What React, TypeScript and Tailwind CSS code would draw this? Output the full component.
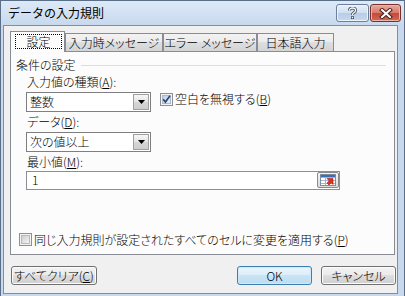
import type { ReactNode } from "react";

function Check({ checked = false }: { checked?: boolean }) {
  const id = checked ? "cbOn" : "cbOff";
  return (
    <svg width="13" height="13" viewBox="0 0 13 13" className="shrink-0">
      <defs>
        <linearGradient id={id} x1="0" y1="0" x2="1" y2="1">
          <stop offset="0" stopColor={checked ? "#b9cbe4" : "#cbcbcb"} />
          <stop offset="1" stopColor={checked ? "#eef3fa" : "#f7f7f7"} />
        </linearGradient>
      </defs>
      <rect x="0.5" y="0.5" width="12" height="12" fill="#f4f4f4" stroke="#8e8f8f" />
      <rect x="2.5" y="2.5" width="8" height="8" fill={`url(#${id})`} stroke={checked ? "#a9b9d0" : "#b9b9b9"} />
      {checked && (
        <path d="M3.2 6.3 L5.4 9 L10 2.8" fill="none" stroke="#2f467d" strokeWidth="1.7" />
      )}
    </svg>
  );
}

function Combo({ value }: { value: string }) {
  return (
    <div className="flex h-[20px] w-[125px] border border-[#7f7f7f] bg-white">
      <span className="flex flex-1 items-center pl-[3px]">{value}</span>
      <span className="m-px flex w-[16px] items-center justify-center border border-[#a0a0a0] bg-[linear-gradient(#f6f6f6,#e4e4e4_50%,#d6d6d6_50%,#cdcdcd)]">
        <svg width="7" height="4" viewBox="0 0 7 4">
          <polygon points="0,0 7,0 3.5,4" fill="#000" />
        </svg>
      </span>
    </div>
  );
}

function Btn({ children, main = false, w }: { children: ReactNode; main?: boolean; w: string }) {
  return (
    <div
      className={
        main
          ? `${w} flex h-[19px] items-center justify-center rounded-[3px] border border-[#3c7fb1] bg-[linear-gradient(#eaf5fc,#dbeef9_50%,#c9e4f6_50%,#bddcf1)] shadow-[inset_0_0_0_1px_#cdeafc]`
          : `${w} flex h-[19px] items-center justify-center rounded-[3px] border border-[#707070] bg-[linear-gradient(#f2f2f2,#ebebeb_50%,#dddddd_50%,#cfcfcf)] shadow-[inset_0_0_0_1px_#fcfcfc]`
      }
    >
      {children}
    </div>
  );
}

function Tab({ label, w }: { label: string; w: string }) {
  return (
    <div
      className={`${w} flex h-[18px] items-center justify-center border-x border-t border-[#898c95] bg-[linear-gradient(#f3f3f3,#ebebeb_50%,#dedede_50%,#d4d4d4)]`}
    >
      {label}
    </div>
  );
}

export default function App() {
  return (
    <div className="h-[296px] w-[405px] overflow-hidden bg-white">
      <div className="flex h-[296px] w-[405px] flex-col border-x border-t border-[#5b6f88] bg-[#c8d9ee] font-['Noto_Sans_CJK_JP',sans-serif] text-[12px] font-light leading-none text-black">
        {/* title bar */}
        <div className="flex h-[24px] shrink-0 items-center bg-[linear-gradient(#dde9f7,#c8d9ee)] pl-[7px] pr-[3px]">
          <span className="flex-1 font-normal">データの入力規則</span>
          <div className="flex h-[18px] w-[33px] items-center justify-center rounded-[3px] border border-[#6a7f9b] bg-[linear-gradient(#e6eef9,#d2dff0_50%,#b8cce6_50%,#c6d8ee)] shadow-[inset_0_0_0_1px_#eef4fb]">
            <svg width="9" height="12" viewBox="0 0 9 12">
              <path d="M1.5 3.5 Q1.5 1 4.5 1 Q7.5 1 7.5 3.5 Q7.5 5 5.5 6 Q4.5 6.5 4.5 8" fill="none" stroke="#3d4f66" strokeWidth="3" />
              <path d="M1.5 3.5 Q1.5 1 4.5 1 Q7.5 1 7.5 3.5 Q7.5 5 5.5 6 Q4.5 6.5 4.5 8" fill="none" stroke="#fff" strokeWidth="1.3" />
              <rect x="3" y="9.2" width="3" height="2.8" fill="#3d4f66" />
              <rect x="3.8" y="9.9" width="1.4" height="1.4" fill="#fff" />
            </svg>
          </div>
          <div className="ml-px flex h-[18px] w-[31px] items-center justify-center rounded-[3px] border border-[#7a2f2a] bg-[linear-gradient(#e9a899,#d6796b_50%,#c4483b_50%,#cf6a52)] shadow-[inset_0_0_0_1px_#ecb4a8]">
            <svg width="14" height="11" viewBox="0 0 14 11">
              <path d="M3 2 L11 9 M11 2 L3 9" stroke="#4a1f1a" strokeWidth="4" strokeLinecap="square" />
              <path d="M3 2 L11 9 M11 2 L3 9" stroke="#fff" strokeWidth="2" strokeLinecap="square" />
            </svg>
          </div>
        </div>

        {/* client area */}
        <div className="ml-[2px] flex h-[269px] w-[395px] flex-col border border-[#7d8ea6] bg-[#f0f0f0] pt-[5px] [font-feature-settings:'palt']">
          {/* tabs */}
          <div className="ml-[6px] flex h-[20px] items-end">
            <div className="relative z-10 -mb-px flex h-[21px] w-[55px] items-start border-x border-t border-[#898c95] bg-[#fcfcfc] pl-[4px] pt-[2px]">
              <span className="flex h-[15px] w-[47px] items-center justify-center border border-dotted border-black">設定</span>
            </div>
            <Tab label="入力時メッセージ" w="w-[98px]" />
            <Tab label="エラー メッセージ" w="w-[94px]" />
            <Tab label="日本語入力" w="w-[77px]" />
          </div>

          {/* tab panel */}
          <div className="ml-[6px] flex h-[204px] w-[385px] flex-col border border-[#898c95] bg-[#fcfcfc]">
            <div className="mt-[6px] flex h-[14px] items-center pl-[5px] pr-[8px]">
              <span>条件の設定</span>
              <span className="ml-[5px] h-px flex-1 bg-[#d5dfe5]" />
            </div>

            <div className="flex flex-col pl-[15px]">
              <div className="mt-[3px] flex h-[14px] items-center pl-px">
                入力値の種類(<u>A</u>):
              </div>
              <div className="mt-[3px] flex items-start">
                <Combo value="整数" />
                <span className="ml-[9px] mt-px">
                  <Check checked />
                </span>
                <span className="ml-[2px] flex h-[14px] items-center">
                  空白を無視する(<u>B</u>)
                </span>
              </div>
              <div className="mt-[3px] flex h-[14px] items-center pl-px">
                データ(<u>D</u>):
              </div>
              <div className="mt-[3px] flex">
                <Combo value="次の値以上" />
              </div>
              <div className="mt-[3px] flex h-[14px] items-center pl-px">
                最小値(<u>M</u>):
              </div>
              <div className="mt-[2px] flex h-[19px] w-[314px] items-end border border-[#8d8f96] bg-white pb-px">
                <span className="flex h-[16px] flex-1 items-center pl-[5px]">1</span>
                <span className="flex h-[16px] w-[22px] items-center justify-center rounded-[2px] border border-[#8a8a8a] bg-[linear-gradient(#f4f4f4,#dcdcdc)]">
                  <svg width="16" height="12" viewBox="0 0 16 12">
                    <rect x="0.5" y="0.5" width="15" height="11" fill="#fff" stroke="#7d8ba3" />
                    <rect x="1" y="1" width="14" height="2.5" fill="#3a6cc0" />
                    <path d="M1 6.5 H15 M1 9.5 H15 M5.5 3.5 V11" stroke="#a7b3c6" strokeWidth="1" />
                    <polygon points="7,4.5 13,4.5 13,10.5 11.3,8.8 9,11 7,9 9.2,6.7" fill="#e0311f" stroke="#9a1a10" strokeWidth="0.6" />
                  </svg>
                </span>
              </div>
            </div>

            <div className="mb-[8px] mt-auto flex h-[13px] items-center pl-[8px]">
              <Check />
              <span className="ml-[2px]">
                同じ入力規則が設定されたすべてのセルに変更を適用する(<u>P</u>)
              </span>
            </div>
          </div>

          {/* buttons */}
          <div className="mt-[11px] flex pl-[7px] pr-px">
            <Btn w="w-[86px]">
              すべてクリア(<u>C</u>)
            </Btn>
            <div className="ml-auto">
              <Btn w="w-[75px]" main>
                OK
              </Btn>
            </div>
            <div className="ml-[9px]">
              <Btn w="w-[75px]">キャンセル</Btn>
            </div>
          </div>
        </div>

        <div className="h-[2px]" />
      </div>
    </div>
  );
}
